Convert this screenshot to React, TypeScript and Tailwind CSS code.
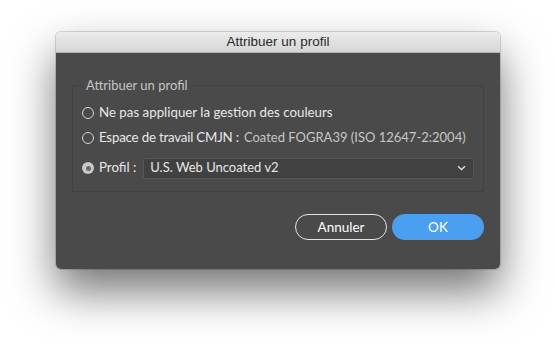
import React from 'react';

const Radio = ({ checked = false }: { checked?: boolean }) =>
  checked ? (
    <span className="w-[12px] h-[12px] rounded-full bg-[#c9c9c9] flex items-center justify-center shrink-0">
      <span className="w-[5px] h-[5px] rounded-full bg-[#6b6b6b]" />
    </span>
  ) : (
    <span className="w-[12px] h-[12px] rounded-full border border-[#d6d6d6] shrink-0" />
  );

const App = () => {
  return (
    <div className="w-[555px] h-[350px] bg-white pt-[32px] pl-[56px] font-['Lato',sans-serif]">
      <div className="w-[444px] h-[237px] rounded-[5px] overflow-hidden flex flex-col shadow-[0_22px_45px_rgba(0,0,0,0.55)] ring-1 ring-black/15">
        <div className="h-[21px] shrink-0 bg-gradient-to-b from-[#ececec] to-[#d6d6d6] border-b border-[#b4b4b4] flex items-center justify-center text-[13.5px] text-[#2a2a2a] font-['Liberation_Sans',sans-serif]">
          Attribuer un profil
        </div>

        <div className="flex-1 bg-[#4a4a4a] px-[16px] pt-[24px] flex flex-col">
          <fieldset className="h-[115px] border border-[#414141] rounded-[2px] pl-[9px] pr-[9px] pt-[8px]">
            <legend className="px-[4px] text-[13px] text-[#c4c4c4] leading-[16px]">Attribuer un profil</legend>

            <div className="flex flex-col text-[13.3px] text-[#e8e8e8]">
              <label className="h-[24px] flex items-center gap-[5px]">
                <Radio />
                <span>Ne pas appliquer la gestion des couleurs</span>
              </label>
              <label className="h-[26px] flex items-center gap-[5px]">
                <Radio />
                <span className="tracking-[-0.2px]">Espace de travail CMJN :</span>
                <span className="text-[13px] text-[#c6c6c6]">Coated FOGRA39 (ISO 12647-2:2004)</span>
              </label>
              <label className="h-[34px] flex items-center gap-[5px]">
                <Radio checked />
                <span>Profil :</span>
                <div className="ml-[2px] flex-1 h-[21px] bg-[#414141] border border-[#575757] rounded-[2px] flex items-center justify-between pl-[6px] pr-[7px] text-[13px]">
                  <span>U.S. Web Uncoated v2</span>
                  <svg width="9" height="6" viewBox="0 0 9 6" fill="none">
                    <path d="M1 1.2 L4.5 4.5 L8 1.2" stroke="#e0e0e0" strokeWidth="1.3" />
                  </svg>
                </div>
              </label>
            </div>
          </fieldset>

          <div className="mt-[22px] flex justify-end gap-[5px] text-[13.5px] text-white">
            <button className="w-[92px] h-[26px] rounded-full border border-[#e4e4e4]">Annuler</button>
            <button className="w-[92px] h-[26px] rounded-full bg-[#4a9ff0]">OK</button>
          </div>
        </div>
      </div>
    </div>
  );
};

export default App;
